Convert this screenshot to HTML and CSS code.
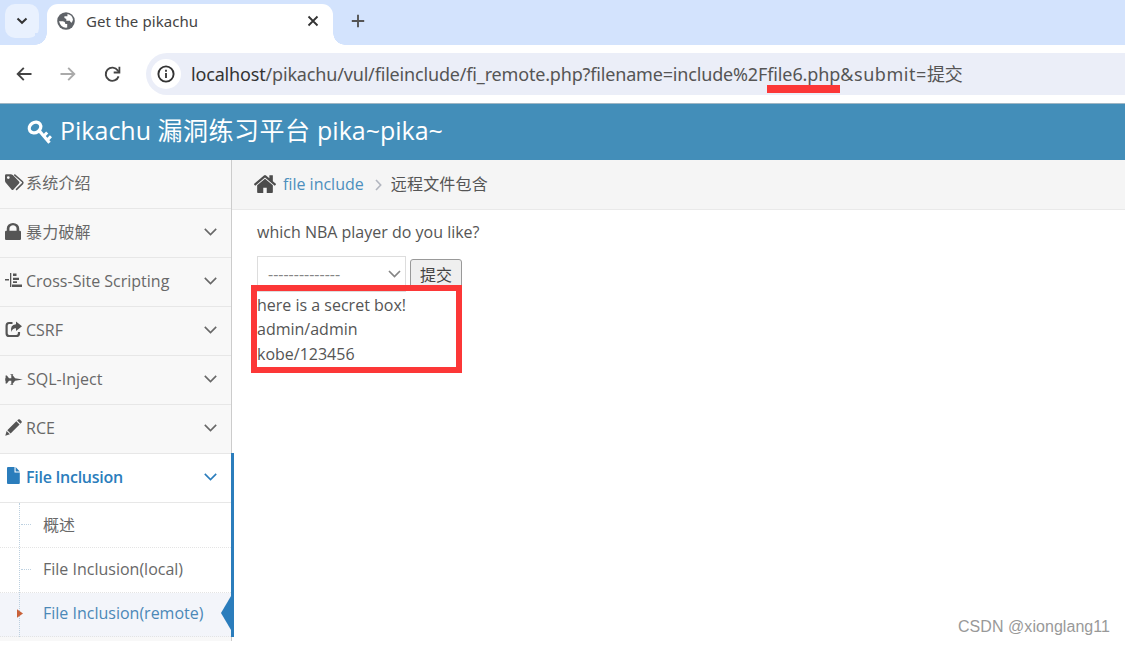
FILE: index.html
```html
<!DOCTYPE html>
<html lang="zh-CN">
<head>
    <meta charset="UTF-8">
    <meta name="viewport" content="width=device-width, initial-scale=1.0">
    <title>Get the pikachu</title>
    <link rel="stylesheet" href="styles.css">
</head>
<body>
    <!-- browser -->
    <div class="tab-strip">
        <div class="tab-search">
            <svg width="12" height="8" viewBox="0 0 12 8"><path d="M1.5 1.5 6 5.8l4.5-4.3" fill="none" stroke="#333" stroke-width="2"/></svg>
        </div>
        <div class="tab">
            <svg class="globe" width="18" height="18" viewBox="0 0 18 18">
                <circle cx="9" cy="9" r="8.8" fill="#5f6368"/>
                <path d="M2 9.2h3.8q2.6.3 2.6 2.8h1.8v3.6Q4 16.500 2 9.200zM10.500 2.100q4.700.8 5.500 5.700l-1.200 3q-1.700-.3-1.900-2H9.300V6.900L7.400 6V4.300h3z" fill="#fff"/>
            </svg>
            <span class="tab-title">Get the pikachu</span>
            <svg class="tab-close" width="12" height="12" viewBox="0 0 12 12"><path d="m1.500 1.500 9 9m0-9-9 9" fill="none" stroke="#333" stroke-width="1.800"/></svg>
        </div>
        <svg class="tab-new" width="14" height="14" viewBox="0 0 14 14"><path d="M7 .8v12.400M.8 7h12.400" stroke="#555" stroke-width="1.900"/></svg>
    </div>
    <div class="toolbar">
        <svg class="back" width="16" height="14" viewBox="0 0 16 14"><path d="M15.500 7H1.700M7.800.9 1.700 7l6.100 6.100" fill="none" stroke="#444" stroke-width="1.900"/></svg>
        <svg class="forward" width="16" height="14" viewBox="0 0 16 14"><path d="M.5 7h13.800M8.200.9 14.300 7l-6.100 6.100" fill="none" stroke="#aaa" stroke-width="1.900"/></svg>
        <svg class="reload" width="17" height="17" viewBox="0 0 17 17"><path d="M14.600 10.400A6.600 6.600 0 1 1 13.800 4.500L15 6" fill="none" stroke="#444" stroke-width="1.900"/><path d="M16.300.8v6.600H9.700V5.600h4.800V.8z" fill="#444"/></svg>
        <div class="omnibox">
            <span class="site-info">
                <svg width="18" height="18" viewBox="0 0 18 18"><circle cx="9" cy="9" r="7.600" fill="none" stroke="#333" stroke-width="1.900"/><path d="M8.100 8h1.800v5H8.100zM8.100 4.800h1.800v1.900H8.100z" fill="#333"/></svg>
            </span>
            <span class="url"><b>localhost</b>/pikachu/vul/fileinclude/fi_remote.php?filename=include%2F<span class="marked">file6.php</span><span class="url-end">&amp;submit=</span>提交</span>
        </div>
    </div>

    <!-- navbar -->
    <div class="navbar">
        <svg class="key" width="25" height="25" viewBox="0 0 25 25">
            <ellipse cx="8" cy="7.500" rx="6.100" ry="5.100" transform="rotate(-35 8 7.500)" fill="none" stroke="#fff" stroke-width="3.200"/>
            <path d="m12 10.500 10.500 12.200" stroke="#fff" stroke-width="3.200"/>
            <path d="m16.500 16.300 3.700-3.800M20 20.400l4-4.200" stroke="#fff" stroke-width="3"/>
        </svg>
        <span class="brand">Pikachu <span class="brand-cn">漏洞练习平台</span> pika~pika~</span>
    </div>

    <div class="main-container">
        <ul class="sidebar">
            <li class="nav-item">
                <svg class="icon wide" width="20" height="17" viewBox="0 0 20 17"><path fill-rule="evenodd" d="M0 1.500Q0 .2 1.300.2h4.300q1.300 0 2.200.9l6.200 6.500q1 1 0 2l-5.500 6q-1 1-2 0L1 9Q0 8 0 6.800zM3.300 2.200a1.400 1.400 0 1 0 0 2.800 1.400 1.400 0 0 0 0-2.800z"/><path d="m9.300.6 8.200 7.200q.9.900 0 1.800l-6.400 6.300" fill="none" stroke="#555" stroke-width="1.500"/></svg>
                <span class="menu-text cn">系统介绍</span>
            </li>
            <li class="nav-item">
                <svg class="icon lock" width="16" height="17" viewBox="320 128 1152 1408" preserveAspectRatio="none"><path d="M640 768h512v-192q0-106-75-181t-181-75-181 75-75 181v192zm832 96v576q0 40-28 68t-68 28h-960q-40 0-68-28t-28-68v-576q0-40 28-68t68-28h32v-192q0-184 132-316t316-132 316 132 132 316v192h32q40 0 68 28t28 68z"/></svg>
                <span class="menu-text cn">暴力破解</span>
                <svg class="arrow" width="13" height="8" viewBox="0 0 13 8"><path d="m.8.900 5.700 5.700L12.200.900"/></svg>
            </li>
            <li class="nav-item">
                <svg class="icon" width="17" height="17" viewBox="0 0 17 17"><path d="M0 7h4v1.500H0zM5 1h1.300v14H5zM8 1.500h3.500V4H8zM8 5.700h6V8H8zM8 9.200h4V11H8zM7 12.500h10V15H7z"/></svg>
                <span class="menu-text">Cross-Site Scripting</span>
                <svg class="arrow" width="13" height="8" viewBox="0 0 13 8"><path d="m.8.900 5.700 5.700L12.200.900"/></svg>
            </li>
            <li class="nav-item">
                <svg class="icon" width="17" height="17" viewBox="0 0 17 17"><path d="M7.500 2H4Q1.600 2 1.600 4.800v7.400Q1.600 15 4.200 15h7q2.800 0 2.800-2.800V11" fill="none" stroke="#555" stroke-width="2.200"/><path d="M11 .6 17 5.300l-6 4.700V7.300Q7.500 7 6.500 11 4.500 4 11 3.300z"/></svg>
                <span class="menu-text">CSRF</span>
                <svg class="arrow" width="13" height="8" viewBox="0 0 13 8"><path d="m.8.900 5.700 5.700L12.200.900"/></svg>
            </li>
            <li class="nav-item jet">
                <svg class="icon" width="18" height="11" viewBox="0 0 18 11"><path d="M.6 1.500h1.300L4 4.300h2.300V1h-.8V.3h2.600V1h-.6l2.600 3.200 7.700 1.300-7.700 1.300L7.500 10h.6v.7H5.500V10h.8V6.700H4L1.900 9.500H.6V6.700H.2V4.300h.4z"/></svg>
                <span class="menu-text">SQL-Inject</span>
                <svg class="arrow" width="13" height="8" viewBox="0 0 13 8"><path d="m.8.900 5.700 5.700L12.200.900"/></svg>
            </li>
            <li class="nav-item">
                <svg class="icon" width="17" height="17" viewBox="0 0 17 17"><path d="M.3 16.700 1.600 12 4.900 15.300zM2.300 11.200 11.300 2.300l3.300 3.300-9 9zM12.200 1.400 13.200.5q.9-.7 1.700 0l1.500 1.500q.8.900 0 1.700l-1 1z"/></svg>
                <span class="menu-text">RCE</span>
                <svg class="arrow" width="13" height="8" viewBox="0 0 13 8"><path d="m.8.900 5.700 5.700L12.200.900"/></svg>
            </li>
            <li class="nav-group">
                <div class="nav-item open">
                    <svg class="icon file" width="13" height="17" viewBox="0 0 13 17"><path d="M0 1Q0 0 1 0h6.500v5.500h5.300V16q0 1-1 1H1q-1 0-1-1zM8.600 0l4.200 4.400H8.600z"/></svg>
                    <span class="menu-text">File Inclusion</span>
                    <svg class="arrow" width="13" height="8" viewBox="0 0 13 8"><path d="m.8.900 5.700 5.700L12.200.900"/></svg>
                </div>
                <ul class="submenu">
                    <li>概述</li>
                    <li>File Inclusion(local)</li>
                    <li class="active">File Inclusion(remote)</li>
                </ul>
            </li>
        </ul>

        <div class="main-content">
            <div class="breadcrumbs">
                <svg class="home" width="22" height="18" viewBox="89 246 1614 1290" preserveAspectRatio="none"><path d="M1472 992v480q0 26-19 45t-45 19h-384v-384h-256v384h-384q-26 0-45-19t-19-45v-480q0-1 .5-3t.5-3l575-474 575 474q1 2 1 6zm223-69l-62 74q-8 9-21 11h-3q-13 0-21-7l-692-577-692 577q-12 8-24 7-13-2-21-11l-62-74q-8-10-7-23.500t11-21.500l719-599q32-26 76-26t76 26l244 204v-195q0-14 9-23t23-9h192q14 0 23 9t9 23v408l219 182q10 8 11 21.500t-7 23.500z"/></svg>
                <a>file include</a>
                <svg class="sep" width="7" height="12" viewBox="0 0 7 12"><path d="m1 1 4.700 5L1 11" fill="none" stroke="#b2b6bf" stroke-width="1.600"/></svg>
                <span class="cn">远程文件包含</span>
            </div>
            <div class="page-content">
                <p class="question">which NBA player do you like?</p>
                <form class="player-form">
                    <div class="select">
                        <span>--------------</span>
                        <svg width="13" height="8" viewBox="0 0 13 8"><path d="m1 1 5.500 5.500L12 1" fill="none" stroke="#858585" stroke-width="1.700"/></svg>
                    </div>
                    <button class="submit" type="button">提交</button>
                </form>
                <div class="result">
                    <p>here is a secret box!</p>
                    <p>admin/admin</p>
                    <p>kobe/123456</p>
                </div>
            </div>
        </div>
    </div>
    <div class="watermark">CSDN @xionglang11</div>
</body>
</html>
```
FILE: styles.css
```css
*,
*::before,
*::after {
    box-sizing: border-box;
}

body {
    position: relative;
    margin: 0;
    width: 1125px;
    height: 645px;
    overflow: hidden;
    background: #fff;
    color: #555;
    font-family: "Open Sans", "Noto Sans CJK SC", sans-serif;
    font-size: 16px;
}

ul {
    margin: 0;
    padding: 0;
    list-style: none;
}

p {
    margin: 0;
}

svg {
    display: block;
    flex: none;
}

/* browser */
.tab-strip {
    display: flex;
    height: 45px;
    background: #d3e3fd;
}

.tab-search {
    display: flex;
    align-items: center;
    justify-content: center;
    width: 34px;
    height: 34px;
    margin: 4px 8px 0 5px;
    border-radius: 10px;
    background: #e9f1fe;
}

.tab {
    position: relative;
    display: flex;
    align-items: center;
    width: 286px;
    height: 41px;
    margin-top: 4px;
    padding: 0 14px 7px 10px;
    border-radius: 11px 11px 0 0;
    background: #fff;
}

.tab::before,
.tab::after {
    content: "";
    position: absolute;
    bottom: 0;
    width: 12px;
    height: 12px;
}

.tab::before {
    left: -12px;
    background: radial-gradient(circle at 0 0, #d3e3fd 11.5px, #fff 12px);
}

.tab::after {
    right: -12px;
    background: radial-gradient(circle at 100% 0, #d3e3fd 11.5px, #fff 12px);
}

.tab-title {
    flex: 1;
    margin-left: 11px;
    color: #444;
    font-family: "Noto Sans", sans-serif;
    font-size: 15px;
    letter-spacing: 0.08px;
}

.tab-new {
    margin: 14px 0 0 18px;
}

.toolbar {
    display: flex;
    align-items: center;
    height: 58px;
    padding: 0 0 0 16px;
    background: #fff;
}

.forward {
    margin-left: 28px;
}

.reload {
    margin-left: 28px;
}

.omnibox {
    display: flex;
    flex: 1;
    align-items: center;
    height: 42px;
    margin-left: 25px;
    padding-left: 5px;
    border-radius: 21px 0 0 21px;
    background: #ebeef8;
}

.site-info {
    display: flex;
    align-items: center;
    justify-content: center;
    width: 30px;
    height: 30px;
    border-radius: 50%;
    background: #fff;
}

.url {
    margin-left: 10px;
    padding-bottom: 3px;
    color: #555;
    font-family: "Noto Sans", "Noto Sans CJK SC", sans-serif;
    font-size: 18px;
    letter-spacing: -0.17px;
    white-space: nowrap;
}

.url b {
    color: #333;
    font-weight: 400;
}

.url-end {
    letter-spacing: 0.55px;
}

.marked {
    position: relative;
    letter-spacing: -0.1px;
}

.marked::after {
    content: "";
    position: absolute;
    right: 0;
    bottom: -7px;
    left: 0;
    height: 8px;
    background: #fc3737;
}

/* navbar */
.navbar {
    display: flex;
    align-items: center;
    height: 57px;
    padding-left: 27px;
    border-top: 1px solid #9fb6c4;
    background: #438eb9;
    color: #fff;
}

.brand {
    margin: -7px 0 0 8px;
    font-size: 25px;
    white-space: nowrap;
}

.brand-cn {
    letter-spacing: 0.5px;
}

/* sidebar */
.main-container {
    display: flex;
    height: 481px;
}

.sidebar {
    width: 232px;
    border-right: 1px solid #ccc;
    background: #f8f8f8;
}

.nav-item {
    display: flex;
    align-items: center;
    height: 49px;
    padding: 0 14px 3px 5px;
    border-bottom: 1px solid #e7e7e7;
    color: #686868;
}

.icon {
    width: 17px;
    margin-right: 4px;
    fill: #555;
}

.icon.wide {
    width: 20px;
    margin-right: 1px;
}

.icon.lock {
    width: 16px;
    margin-right: 5px;
}

.jet .icon {
    width: 18px;
    margin-top: 2px;
}

.menu-text {
    flex: 1;
    white-space: nowrap;
}

.cn {
    padding-bottom: 2px;
    letter-spacing: 0.2px;
}

.arrow {
    margin-top: 1px;
    fill: none;
    stroke: #686868;
    stroke-width: 1.6;
}

.nav-group {
    position: relative;
    width: 234px;
    margin-top: -1px;
    border-right: 3px solid #2b7dbc;
}

.nav-item.open {
    height: 50px;
    padding-right: 14px;
    border-top: 1px solid #e7e7e7;
    background: #fff;
    color: #2b7dbc;
    font-weight: 600;
    letter-spacing: -0.27px;
}

.open .icon {
    width: 13px;
    margin: -2px 6px 0 2px;
    fill: #2b7dbc;
}

.open .arrow {
    stroke: #2b7dbc;
}

.submenu {
    position: relative;
    background: #fff;
}

.submenu::before {
    content: "";
    position: absolute;
    z-index: 1;
    top: 0;
    bottom: 0;
    left: 19px;
    border-left: 1px dotted #bcd0e0;
}

.submenu li {
    position: relative;
    display: flex;
    align-items: center;
    height: 45px;
    padding: 0 0 3px 43px;
    border-bottom: 1px dotted #e4e4e4;
    color: #686868;
}

.submenu li::before {
    content: "";
    position: absolute;
    top: 21px;
    left: 21px;
    width: 10px;
    border-top: 1px dotted #bcd0e0;
}

.submenu li.active {
    height: 44px;
    background: #f3f5fa;
    color: #4b88b7;
}

.submenu li.active::before {
    z-index: 2;
    top: 12px;
    left: 17px;
    width: 6px;
    height: 17px;
    border: 0;
    background: #c86139;
    clip-path: polygon(0 25%, 100% 50%, 0 75%);
}

.submenu li.active::after {
    content: "";
    position: absolute;
    top: 3px;
    right: 0;
    border: solid transparent;
    border-width: 17px 10px 17px 0;
    border-right-color: #2b7dbc;
}

/* content */
.main-content {
    flex: 1;
}

.breadcrumbs {
    display: flex;
    align-items: center;
    height: 50px;
    padding: 0 0 1px 22px;
    border-bottom: 1px solid #e9e9e9;
    background: #f5f5f5;
}

.home {
    fill: #4c4c4c;
}

.breadcrumbs a {
    margin-left: 7px;
    color: #4c8fbd;
}

.sep {
    margin: 2px 9px 0 11px;
}

.page-content {
    padding: 10px 0 0 25px;
}

.question {
    line-height: 24px;
}

.player-form {
    display: flex;
    gap: 4px;
    height: 36px;
    margin-top: 12px;
}

.select {
    display: flex;
    align-items: center;
    justify-content: space-between;
    width: 149px;
    height: 36px;
    padding: 0 4px 0 10px;
    border: 1px solid #ddd;
    color: #858585;
}

.submit {
    width: 52px;
    height: 31px;
    margin: 3px 0 0;
    padding: 0 0 2px;
    border: 1px solid #999;
    border-radius: 3px;
    background: #efefef;
    color: #444;
    font: 16px "Noto Sans CJK SC", sans-serif;
}

.result {
    position: relative;
    padding-top: 1px;
    line-height: 24.4px;
}

/* red frame drawn over the result and the bottom of the form */
.result::before {
    content: "";
    position: absolute;
    top: -7px;
    left: -6px;
    width: 211px;
    height: 88px;
    border: 6px solid #fc3737;
}

.watermark {
    position: absolute;
    right: 15px;
    bottom: 9px;
    color: #999;
    font-family: "Liberation Sans", sans-serif;
    font-size: 16px;
    letter-spacing: 0.05px;
}
```
